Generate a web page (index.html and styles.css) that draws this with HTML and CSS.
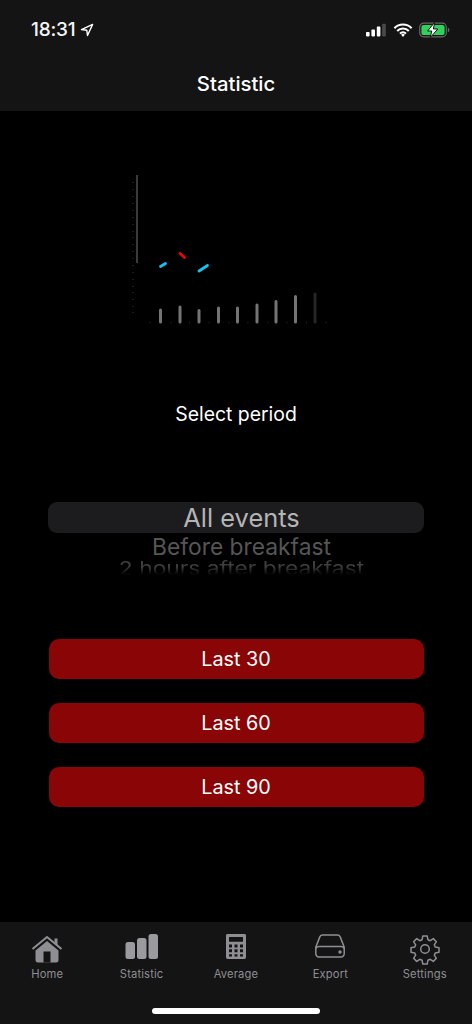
FILE: index.html
```html
<!DOCTYPE html>
<html lang="en">
<head>
<meta charset="utf-8">
<title>Statistic</title>
<link rel="stylesheet" href="styles.css">
</head>
<body>
<div class="app">
  <header class="top">
    <div class="status">
      <div class="time">18:31
        <svg class="loc" width="14" height="14" viewBox="0 0 14 14"><path d="M12.6 1.4 1.5 6.6l5.3.6.7 5.3z" fill="none" stroke="#fff" stroke-width="1.4" stroke-linejoin="round"/></svg>
      </div>
      <div class="sys">
        <svg width="21" height="14" viewBox="0 0 21 14"><rect x="0" y="9" width="3.6" height="4.4" rx=".8" fill="#fff"/><rect x="5.4" y="6.6" width="3.6" height="6.8" rx=".8" fill="#fff"/><rect x="10.8" y="3.6" width="3.6" height="9.8" rx=".8" fill="#fff"/><rect x="16.2" y=".8" width="3.6" height="12.6" rx=".8" fill="#4a4a4a"/></svg>
        <svg width="20" height="14" viewBox="0 0 20 14"><path d="M1.4 5.2a12 12 0 0 1 17.2 0M4.2 8a8 8 0 0 1 11.6 0M7 10.6a4 4 0 0 1 6 0" fill="none" stroke="#fff" stroke-width="2.1"/><path d="M10 14l-1.9-2.2a2.6 2.6 0 0 1 3.8 0z" fill="#fff"/></svg>
        <svg width="31" height="16" viewBox="0 0 31 16"><rect x=".7" y="1.2" width="26.6" height="13.6" rx="3.8" fill="none" stroke="#666" stroke-width="1.2"/><rect x="2.4" y="2.9" width="23.2" height="10.2" rx="2.2" fill="#2fd15a"/><path d="M28.8 5.8c1 .3 1.6 1.1 1.6 2.2s-.6 1.9-1.6 2.2z" fill="#666"/><path d="M15.6 0.4 8.6 9h4.2l-1.6 6.6L18.800 7h-4.400z" fill="#fff" stroke="#141414" stroke-width="1"/></svg>
      </div>
    </div>
    <h1 class="title">Statistic</h1>
  </header>

  <main class="main">
    <svg class="chart" width="220" height="160" viewBox="120 170 220 160">
      <g class="axis-ticks" stroke="#1c1c1c" stroke-width="1">
        <path d="M132 182.500h2M132 189.500h2M132 196.500h2M132 203.500h2M132 210.500h2M132 217.500h2M132 224.500h2M132 231.500h2M132 237.500h2M132 244.500h2M132 251.500h2M132 258.500h2M132 265.500h2M132 272.500h2M132 279.500h2M132 286.500h2M132 292.500h2M132 299.500h2M132 306.500h2M132 312.500h2"/>
        <path d="M150 321.500v2M171 321.500v2M189.500 321.500v2M209 321.500v2M229 321.500v2M248 321.500v2M268 321.500v2M287 321.500v2M306.500 321.500v2M326 321.500v2"/>
      </g>
      <path d="M137 175v88" stroke="#777" stroke-width="1"/>
      <g stroke="#747474" stroke-width="3" stroke-linecap="round">
        <path d="M160.500 310v12M180 307v15M199 310.500v11.500M218.500 308v14M237.500 308v14M257 305v17M276 301.500v20.500M295.500 296.500v25.500"/>
        <path d="M315 294v28" stroke="#262626"/>
      </g>
      <path d="M160.500 266.500l5-3M199 271l8.500-5.500" stroke="#0fc4ee" stroke-width="2.800" stroke-linecap="round"/>
      <path d="M180 253.500l4.500 4" stroke="#f00000" stroke-width="2.800" stroke-linecap="round"/>
    </svg>

    <p class="prompt">Select period</p>

    <div class="picker">
      <div class="picker-band"></div>
      <div class="opt opt-1">All events</div>
      <div class="opt opt-2">Before breakfast</div>
      <div class="opt opt-3">2 hours after breakfast</div>
    </div>

    <div class="actions">
      <button class="btn">Last 30</button>
      <button class="btn">Last 60</button>
      <button class="btn">Last 90</button>
    </div>
  </main>

  <nav class="tabs">
    <div class="tab-row">
      <div class="tab">
        <svg class="icon" width="32" height="28" viewBox="0 0 32 28"><path d="M1.500 14 16 2l14.500 12" fill="none" stroke="#8e8e93" stroke-width="2" stroke-linejoin="round"/><path d="M23.500 3.500h3v7l-3-2.500z" fill="#8e8e93"/><path d="M4.500 15.500 16 6l11.500 9.500V25a2.500 2.500 0 0 1-2.500 2.500H7A2.500 2.500 0 0 1 4.500 25z" fill="#8e8e93"/><rect x="12.500" y="16.500" width="7" height="11" fill="#141414"/></svg>
        <span>Home</span>
      </div>
      <div class="tab">
        <svg class="icon" width="34" height="28" viewBox="0 0 34 28"><rect x="0.500" y="7" width="9.500" height="17" rx="2.500" fill="#9a9a9f"/><rect x="12" y="3" width="9.500" height="21" rx="2.500" fill="#9a9a9f"/><rect x="23.500" y="-1" width="9.500" height="25" rx="2.500" fill="#9a9a9f"/></svg>
        <span>Statistic</span>
      </div>
      <div class="tab">
        <svg class="icon" width="22" height="28" viewBox="0 0 22 28"><path transform="translate(0 -1.960) scale(1 .96)" fill-rule="evenodd" d="M2.500 1h17A1.500 1.500 0 0 1 21 2.500v23a1.500 1.500 0 0 1-1.500 1.500h-17A1.500 1.500 0 0 1 1 25.500v-23A1.500 1.500 0 0 1 2.500 1zM4 4v5h14V4zM4 12v3h3v-3zM9.500 12v3h3v-3zM15 12v3h3v-3zM4 17v3h3v-3zM9.500 17v3h3v-3zM15 17v3h3v-3zM4 22v2.500h3V22zM9.500 22v2.500h3V22zM15 22v2.500h3V22z" fill="#8e8e93"/></svg>
        <span>Average</span>
      </div>
      <div class="tab">
        <svg class="icon" width="32" height="28" viewBox="0 0 32 28"><path transform="translate(0 -4.400) scale(1 1.100)" d="M8.500 4h15c1.200 0 2.200.7 2.700 1.700l4 9.300v6a3 3 0 0 1-3 3H4.800a3 3 0 0 1-3-3v-6l4-9.300C6.300 4.700 7.300 4 8.500 4zM1.800 16.500c.6-1.300 1.700-2 3-2h22.400c1.300 0 2.400.7 3 2" fill="none" stroke="#8e8e93" stroke-width="1.500"/><circle cx="26" cy="17" r="1.700" fill="#8e8e93"/></svg>
        <span>Export</span>
      </div>
      <div class="tab">
        <svg class="icon" width="30" height="28" viewBox="0 1 30 28"><path d="M12.800 2h4.400l.7 3.700 2.300 1 3.100-2.100 3.100 3.100-2.100 3.100 1 2.300 3.700.7v4.400l-3.700.7-1 2.300 2.100 3.100-3.100 3.100-3.100-2.100-2.300 1-.7 3.700h-4.400l-.7-3.700-2.300-1-3.100 2.100-3.100-3.100 2.100-3.100-1-2.300-3.700-.7v-4.400l3.700-.7 1-2.300-2.100-3.100 3.100-3.100 3.100 2.100 2.300-1z" fill="none" stroke="#8e8e93" stroke-width="1.500" stroke-linejoin="round"/><circle cx="15" cy="15" r="4.300" fill="none" stroke="#8e8e93" stroke-width="1.500"/></svg>
        <span>Settings</span>
      </div>
    </div>
    <div class="home-bar"></div>
  </nav>
</div>
</body>
</html>
```
FILE: styles.css
```css
* { box-sizing: border-box; }
html, body { margin: 0; padding: 0; background: #000; }
body { font-family: Inter, "Noto Sans", "Liberation Sans", sans-serif; color: #fff; }
.app { width: 472px; height: 1024px; display: flex; flex-direction: column; overflow: hidden; }

.top { height: 111px; background: #141414; flex: none; }
.status { height: 71px; padding: 19px 22px 0 31px; display: flex; justify-content: space-between; align-items: flex-start; }
.time { display: flex; align-items: center; gap: 5px; font-size: 19px; font-weight: 500; line-height: 22px; color: #f4f4f4; letter-spacing: -.2px; }
.loc { margin-top: -1px; }
.sys { display: flex; align-items: center; gap: 6px; height: 22px; }
.title { margin: 0; font-size: 20.300px; font-weight: 500; line-height: 26px; text-align: center; }

.main { flex: 1; display: flex; flex-direction: column; align-items: center; }
.chart { display: block; margin-top: 59px; margin-left: -12px; flex: none; }
.prompt { margin: 72px 0 0; font-size: 19.400px; line-height: 24px; font-weight: 400; text-align: center; }

.picker { position: relative; margin-top: 76px; width: 376px; height: 77px; overflow: hidden; text-align: center; }
.picker-band { position: absolute; left: 0; top: 0; width: 100%; height: 31px; border-radius: 9px; background: #1c1c1e; }
.opt { position: relative; white-space: nowrap; padding-left: 11px; }
.opt-1 { font-size: 25.400px; line-height: 32px; color: #b4b4b4; }
.opt-2 { font-size: 22.800px; line-height: 25px; color: #565656; }
.opt-3 { font-size: 22.800px; line-height: 24px; height: 21px; color: #3e3e3e; transform: scaleY(.82); transform-origin: top; -webkit-mask-image: linear-gradient(#000 45%, transparent 92%); mask-image: linear-gradient(#000 45%, transparent 92%); }

.actions { margin-top: 60px; width: 375px; display: flex; flex-direction: column; gap: 24px; }
.btn { height: 40px; border: 0; border-radius: 10px; background: #8a0505; color: #fff; font: 400 19.800px/24px Inter, "Noto Sans", "Liberation Sans", sans-serif; padding: 0; }

.tabs { height: 102px; flex: none; background: #141414; position: relative; }
.tab-row { display: grid; grid-template-columns: repeat(5, 1fr); padding: 9px 0 0; }
.tab { display: flex; flex-direction: column; align-items: center; height: 50px; justify-content: flex-end; gap: 4px; color: #8e8e93; }
.icon { display: block; overflow: visible; margin-top: -1px; }
.tab span { font-size: 11.200px; line-height: 14px; letter-spacing: .15px; }
.home-bar { position: absolute; left: 152px; top: 86px; width: 168px; height: 6px; border-radius: 3px; background: #fff; }
```
